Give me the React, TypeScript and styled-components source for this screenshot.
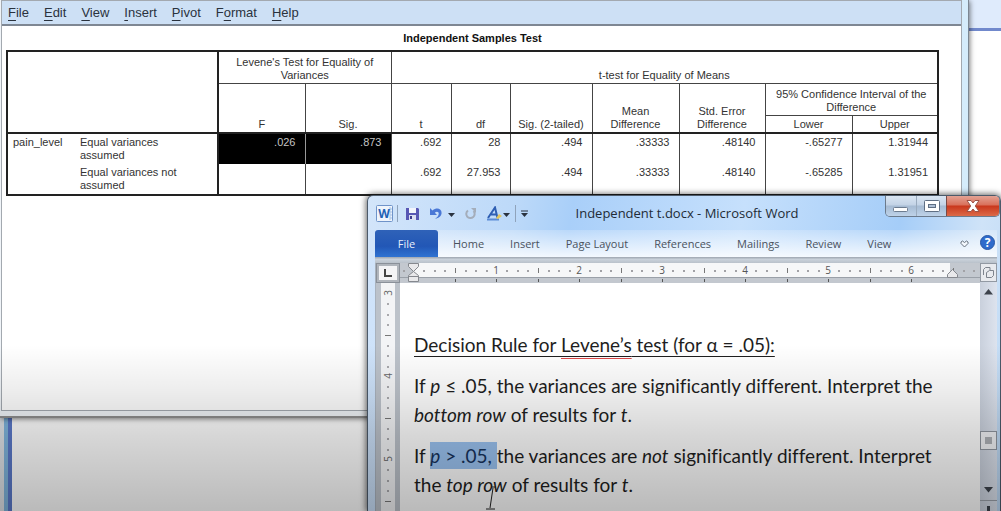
import React from "react";
import styled, { createGlobalStyle } from "styled-components";

const GlobalStyle = createGlobalStyle`
  * { box-sizing: border-box; }
  body { margin: 0; }
  button { margin: 0; padding: 0; border: 0; background: none; font: inherit; color: inherit; }
`;

const Desktop = styled.div`
  position: relative;
  height: 100vh;
  min-height: 480px;
  overflow: hidden;
  background: #fff;
  font-family: "Liberation Sans", Arial, sans-serif;
`;

const BackWindow = styled.div`
  height: 100%;
  border-left: 4px solid #dfe3e8;
  background: #fff;
`;

const BackToolbar = styled.div`
  height: 31px;
  background: #dfebfc;
  border-bottom: 3px solid #7189cc;
`;

const BackEdge = styled.div`
  height: calc(100% - 31px);
  border-left: 4px solid #7fb4dc;
  &::before {
    content: "";
    display: block;
    width: 4px;
    height: 100%;
    background: #5a78c8;
  }
`;

/* ---------- output viewer window ---------- */

const ViewerWindow = styled.section`
  position: absolute;
  top: 0;
  left: 0;
  right: 32px;
  bottom: 93px;
  display: flex;
  flex-direction: column;
  padding: 0 6px 5px 1px;
  background: linear-gradient(90deg, #f0f4f8 0 60%, #d5ecfb);
  border-right: 1px solid #7c8792;
  border-bottom: 2px solid #8d8d8d;
  box-shadow: 1px 1px 5px rgba(0, 0, 0, 0.5);
`;

const ViewerBody = styled.div`
  flex: 1;
  display: flex;
  flex-direction: column;
  border: 1px solid #a3a9b0;
  background: #fff;
`;

const MenuBar = styled.nav`
  display: flex;
  gap: 15px;
  height: 25px;
  padding: 0 6px;
  background: #cde0f5;
  border-bottom: 2px solid #7e8793;
`;

const MenuItem = styled.button`
  font-size: 13px;
  line-height: 23px;
  color: #2a323d;
  u { text-underline-offset: 3px; }
`;

const PivotArea = styled.div`
  padding: 5px 25px 0 4px;
`;

const PivotTable = styled.table`
  width: 100%;
  table-layout: fixed;
  border-collapse: collapse;
  font-size: 11px;
  line-height: 13px;
  color: #333;
  caption {
    padding-bottom: 5px;
    font-weight: bold;
    line-height: 14px;
    color: #111;
  }
  tbody { border: 2px solid #222; }
  thead { border: 2px solid #222; }
`;

const HeadCell = styled.th<{ $heavy?: boolean }>`
  padding: 2px 0 1px;
  font-weight: normal;
  vertical-align: bottom;
  text-align: center;
  border: 1px solid #444;
  border-left: ${(p) => (p.$heavy ? "2px solid #222" : "1px solid #444")};
`;

const HeadRow = styled.tr<{ $h: number }>`
  height: ${(p) => p.$h}px;
`;

const DataRow = styled.tr`
  height: 31px;
`;

const RowLabel = styled.th<{ $sub?: boolean }>`
  padding: ${(p) => (p.$sub ? "2px 30px 2px 0" : "2px 0 2px 5px")};
  font-weight: normal;
  text-align: left;
  vertical-align: top;
`;

const Value = styled.td<{ $selected?: boolean; $heavy?: boolean }>`
  padding: 2px 9px 0 0;
  text-align: right;
  vertical-align: top;
  border-left: ${(p) => (p.$heavy ? "2px solid #222" : p.$selected ? "1px solid #999" : "1px solid #444")};
  background: ${(p) => (p.$selected ? "#000" : "transparent")};
  color: ${(p) => (p.$selected ? "#c4c4c4" : "inherit")};
`;

/* ---------- word processor window ---------- */

const WordWindow = styled.section`
  position: absolute;
  top: 195px;
  left: 367px;
  right: 0;
  bottom: 0;
  display: flex;
  flex-direction: column;
  padding: 0 3px 0 7px;
  border: 1px solid #4c5a6a;
  border-bottom: 0;
  border-radius: 6px 6px 0 0;
  background: linear-gradient(100deg, #d3e5fa 0, #bcd9f9 22%, #a9cff9 30%, #c6e0fc 55%, #a5cdf8 78%, #cfe3f8 90%, #bcd8f4);
  box-shadow: 0 0 6px 1px rgba(0, 0, 0, 0.6);
  font-family: "Open Sans", "Noto Sans", sans-serif;
  overflow: hidden;
`;

const TitleBar = styled.header`
  display: flex;
  align-items: flex-start;
  height: 34px;
`;

const QuickAccess = styled.div`
  display: flex;
  align-items: center;
  padding-top: 8px;
  width: 154px;
`;

const QuickIcon = styled.button<{ $gap: number }>`
  display: flex;
  flex: none;
  margin-right: ${(p) => p.$gap}px;
`;

const Divider = styled.span<{ $gap: number }>`
  flex: none;
  width: 1px;
  height: 17px;
  margin-right: ${(p) => p.$gap}px;
  background: #8fa3bb;
`;

const Title = styled.h1`
  flex: 1;
  margin: 0;
  padding: 7px 40px 0 0;
  font-size: 13px;
  font-weight: normal;
  line-height: 20px;
  text-align: center;
  color: #222b36;
  white-space: nowrap;
`;

const WindowControls = styled.div`
  display: flex;
  height: 21px;
  margin-right: -3px;
  border: 1px solid #6b7a8c;
  border-top: 0;
  border-radius: 0 0 5px 5px;
  overflow: hidden;
`;

const ControlButton = styled.button<{ $close?: boolean }>`
  display: flex;
  align-items: center;
  justify-content: center;
  width: ${(p) => (p.$close ? 53 : 30)}px;
  border-left: ${(p) => (p.$close ? "1px solid #7a4a45" : "1px solid #9aabbe")};
  background: ${(p) =>
    p.$close
      ? "linear-gradient(#e3a294, #d9705a 45%, #c9371c 50%, #dc6a48)"
      : "linear-gradient(#d9e5f2, #c3d3e6 45%, #a6bbd3 50%, #bed2e8)"};
  &:first-child { border-left: 0; }
`;

const TabBar = styled.nav`
  display: flex;
  align-items: stretch;
  gap: 26px;
  height: 27px;
  padding-right: 2px;
  background: linear-gradient(rgba(255, 255, 255, 0.2), rgba(255, 255, 255, 0.85));
  font-size: 11px;
  color: #4a525d;
`;

const Tab = styled.button`
  white-space: nowrap;
`;

const FileTab = styled.button`
  width: 63px;
  margin-right: -11px;
  border-radius: 3px 3px 0 0;
  background: linear-gradient(#2f62b8, #2257b6 60%, #2f73d2);
  color: #e6effb;
`;

const TabTools = styled.div`
  display: flex;
  align-items: center;
  gap: 11px;
  margin-left: auto;
`;

const RibbonEdge = styled.div`
  height: 6px;
  background: linear-gradient(#9da5af, #c9d1da 40%, #b9c1ca);
`;

const Workspace = styled.div`
  flex: 1;
  display: flex;
  min-height: 0;
  border-left: 1px solid #a9b2bd;
  background: #bcc2ca;
`;

const RulerColumn = styled.div`
  display: flex;
  flex-direction: column;
  align-items: center;
  width: 24px;
`;

const TabSelector = styled.button`
  display: flex;
  align-items: center;
  justify-content: center;
  width: 24px;
  height: 20px;
  border: 3px solid #b0b5bc;
  outline: 1px solid #8a9099;
  outline-offset: -1px;
  background: #f4f4f6;
`;

const VerticalRuler = styled.div`
  flex: 1;
  width: 14px;
  overflow: hidden;
  background: #f3f4f6;
`;

const PageColumn = styled.div`
  flex: 1;
  display: flex;
  flex-direction: column;
  min-width: 0;
`;

const HorizontalRuler = styled.div`
  height: 20px;
  overflow: hidden;
`;

const Page = styled.article`
  flex: 1;
  padding: 47px 30px 0 14px;
  overflow: hidden;
  background: #fff;
  color: #1e1e1e;
  font-family: Lato, Carlito, Calibri, sans-serif;
  font-size: 19px;
  font-variant-ligatures: none;
  line-height: 29px;
  p { margin: 0 0 12px; }
`;

const DocHeading = styled.h2`
  margin: 0 0 12px;
  font-size: 19px;
  font-weight: normal;
  text-decoration: underline;
  text-decoration-thickness: 1px;
  text-underline-offset: 4px;
`;

const Misspelled = styled.span`
  text-decoration-line: underline;
  text-decoration-color: #dc4646;
  text-decoration-thickness: 1px;
  text-underline-offset: 6px;
`;

const Selection = styled.span`
  padding: 2px 0;
  background: #9cc4f2;
  color: #16335c;
`;

const ScrollColumn = styled.div`
  display: flex;
  flex-direction: column;
  align-items: center;
  width: 17px;
  background: linear-gradient(90deg, #c9d0dc, #dde3ee);
`;

const RulerToggle = styled.button`
  display: flex;
  align-items: center;
  justify-content: center;
  width: 17px;
  height: 19px;
  border: 1px solid #9299a3;
  background: #e8eaee;
`;

const ScrollArrow = styled.button`
  display: flex;
  align-items: center;
  justify-content: center;
  width: 17px;
  height: 20px;
`;

const Thumb = styled.div`
  display: flex;
  align-items: center;
  justify-content: center;
  width: 17px;
  height: 19px;
  margin: auto 0 30px;
  border: 1px solid #8f959e;
  background: #f2f3f6;
  &::after {
    content: "";
    width: 7px;
    height: 7px;
    background: #aeb1b6;
  }
`;

const PageBrowse = styled.button`
  display: flex;
  justify-content: center;
  width: 17px;
  height: 11px;
  padding-top: 5px;
  border-top: 1px solid #9aa0a9;
`;

const Pointer = styled.svg`
  position: absolute;
  left: 484px;
  top: 484px;
`;

const Vignette = styled.div`
  position: absolute;
  left: 0;
  right: 0;
  bottom: 0;
  height: 166px;
  pointer-events: none;
  background: linear-gradient(rgba(0, 0, 0, 0), rgba(0, 0, 0, 0.07) 27%, rgba(0, 0, 0, 0.16) 55%, rgba(0, 0, 0, 0.27));
`;

const menus: [string, string, string][] = [
  ["", "F", "ile"],
  ["", "E", "dit"],
  ["", "V", "iew"],
  ["", "I", "nsert"],
  ["", "P", "ivot"],
  ["F", "o", "rmat"],
  ["", "H", "elp"],
];

const columnWidths = [73, 138, 87, 86, 60, 59, 82, 87, 86, 87, 86];

const rows = [
  { label: "Equal variances assumed", levene: [".026", ".873"], values: [".692", "28", ".494", ".33333", ".48140", "-.65277", "1.31944"] },
  { label: "Equal variances not assumed", levene: ["", ""], values: [".692", "27.953", ".494", ".33333", ".48140", "-.65285", "1.31951"] },
];

const tabs = ["Home", "Insert", "Page Layout", "References", "Mailings", "Review", "View"];

const INCH = 83;

function RulerScale() {
  const origin = 13;
  const marks = [];
  for (let i = -1; i <= 54; i++) {
    const x = Math.round(origin + (i * INCH) / 8);
    if (i === 0) continue;
    if (i % 8 === 0)
      marks.push(
        <text key={i} x={x} y={11} fontSize={10} textAnchor="middle" fill="#555">{i / 8}</text>
      );
    else if (i % 4 === 0) marks.push(<rect key={i} x={x} y={5} width={1} height={5} fill="#777" />);
    else marks.push(<rect key={i} x={x} y={7} width={2} height={2} fill="#a2a2a6" />);
    if (i > 0 && i % 4 === 0 && i < 51) marks.push(<rect key={`t${i}`} x={x} y={16} width={1} height={3} fill="#555" />);
  }
  return (
    <svg width="1200" height="20" display="block" aria-hidden="true">
      <rect width="1200" height="20" fill="#c3c8cf" />
      <rect x="13" y="0" width="537" height="14" fill="#f6f7f8" />
      <rect y="14" width="1200" height="1" fill="#9aa0a8" />
      {marks}
      <path d="M8.500 .5h10v3l-5 5-5-5z" fill="#e9e9eb" stroke="#85888e" />
      <path d="M13.500 8.500l5 4v6h-10v-6z M8.500 13.500h10" fill="#e9e9eb" stroke="#85888e" />
      <path d="M552.500 6.500l5 5v3h-10v-3z" fill="#e9e9eb" stroke="#85888e" />
    </svg>
  );
}

function VerticalScale() {
  const marks = [];
  for (let i = 0; i <= 22; i++) {
    const y = Math.round(10 + (i * INCH) / 8);
    if (i % 8 === 0)
      marks.push(
        <text key={i} transform={`translate(11 ${y}) rotate(-90)`} fontSize={10} textAnchor="middle" fill="#666">{3 + i / 8}</text>
      );
    else if (i % 4 === 0) marks.push(<rect key={i} x={4} y={y} width={6} height={1} fill="#777" />);
    else marks.push(<rect key={i} x={6} y={y} width={2} height={2} fill="#a9a9ad" />);
  }
  return <svg width="14" height="240" display="block" aria-hidden="true">{marks}</svg>;
}

const Caret = ({ bar }: { bar?: boolean }) => (
  <svg width="7" height="8" viewBox="0 0 7 8">
    {bar && <path d="M0 1h7" stroke="#2a3340" />}
    <path d="M0 3h7L3.500 7z" fill="#2a3340" />
  </svg>
);

function Viewer() {
  return (
    <ViewerWindow aria-label="Output viewer">
      <ViewerBody>
        <MenuBar>
          {menus.map(([pre, key, rest]) => (
            <MenuItem key={pre + key + rest}>{pre}<u>{key}</u>{rest}</MenuItem>
          ))}
        </MenuBar>
        <PivotArea>
          <PivotTable>
            <caption>Independent Samples Test</caption>
            <colgroup>
              {columnWidths.map((w, i) => <col key={i} width={w} />)}
            </colgroup>
            <thead>
              <HeadRow $h={32}>
                <HeadCell as="td" colSpan={2} rowSpan={3} />
                <HeadCell $heavy colSpan={2}>Levene's Test for Equality of Variances</HeadCell>
                <HeadCell colSpan={7}>t-test for Equality of Means</HeadCell>
              </HeadRow>
              <HeadRow $h={32}>
                <HeadCell $heavy rowSpan={2}>F</HeadCell>
                <HeadCell rowSpan={2}>Sig.</HeadCell>
                <HeadCell rowSpan={2}>t</HeadCell>
                <HeadCell rowSpan={2}>df</HeadCell>
                <HeadCell rowSpan={2}>Sig. (2-tailed)</HeadCell>
                <HeadCell rowSpan={2}>Mean<br />Difference</HeadCell>
                <HeadCell rowSpan={2}>Std. Error<br />Difference</HeadCell>
                <HeadCell colSpan={2}>95% Confidence Interval of the Difference</HeadCell>
              </HeadRow>
              <HeadRow $h={16}>
                <HeadCell>Lower</HeadCell>
                <HeadCell>Upper</HeadCell>
              </HeadRow>
            </thead>
            <tbody>
              {rows.map((row, r) => (
                <DataRow key={row.label}>
                  {r === 0 && <RowLabel rowSpan={2}>pain_level</RowLabel>}
                  <RowLabel $sub>{row.label}</RowLabel>
                  {row.levene.map((v, i) => (
                    <Value key={i} $heavy={i === 0} $selected={r === 0}>{v}</Value>
                  ))}
                  {row.values.map((v, i) => <Value key={i}>{v}</Value>)}
                </DataRow>
              ))}
            </tbody>
          </PivotTable>
        </PivotArea>
      </ViewerBody>
    </ViewerWindow>
  );
}

function Word() {
  return (
    <WordWindow aria-label="Microsoft Word">
      <TitleBar>
        <QuickAccess>
          <QuickIcon $gap={3} aria-label="Word menu">
            <svg width="19" height="19" viewBox="0 0 19 19">
              <rect x="1.500" y="1.500" width="16" height="16" rx="1" fill="#eef4fc" stroke="#6f93c9" />
              <path d="M15 3v13M15 5h2M15 8h2M15 11h2M15 14h2" stroke="#a9c3e6" />
              <text x="9" y="14" fontSize="12" fontWeight="bold" textAnchor="middle" fill="#1f62b5">W</text>
            </svg>
          </QuickIcon>
          <Divider $gap={8} />
          <QuickIcon $gap={11} aria-label="Save">
            <svg width="13" height="13" viewBox="0 0 13 13">
              <path d="M0 1h12l1 1v11H0z" fill="#5857b4" />
              <rect x="3" y="1" width="7" height="5" fill="#f3f5fc" />
              <rect x="3" y="8" width="7" height="5" fill="#dcdff2" />
              <rect x="4" y="9" width="2" height="3" fill="#3c3b8c" />
            </svg>
          </QuickIcon>
          <QuickIcon $gap={6} aria-label="Undo">
            <svg width="12" height="14" viewBox="0 0 12 14">
              <path d="M0 1v7h7L4.800 5.800C6.500 3.800 9 4.500 8.700 7c-.2 2-1.700 3.500-3.700 5 4-1 6.500-3 6.600-6C11.700 1.500 6.500 0 2.500 3.600z" fill="#4a78d6" />
            </svg>
          </QuickIcon>
          <QuickIcon $gap={10} aria-label="Undo options"><Caret /></QuickIcon>
          <QuickIcon $gap={11} aria-label="Repeat">
            <svg width="11" height="12" viewBox="0 0 11 12">
              <path d="M3 2.500A4.200 4.200 0 1 0 8.500 3" fill="none" stroke="#a4adba" strokeWidth="2" />
              <path d="M6 0h5v5z" fill="#a4adba" />
            </svg>
          </QuickIcon>
          <QuickIcon $gap={1} aria-label="Text effects">
            <svg width="15" height="15" viewBox="0 0 15 15">
              <path d="M1 12L8 1.500l2.500 10.500M4 8.500h5.500" fill="none" stroke="#2f5fb3" strokeWidth="2" />
              <path d="M0 13.500h12" stroke="#5b8bd6" strokeWidth="2" />
              <path d="M9 12l3-4 3 2-4 3z" fill="#e3c65c" />
            </svg>
          </QuickIcon>
          <QuickIcon $gap={5} aria-label="Text effects options"><Caret /></QuickIcon>
          <Divider $gap={5} />
          <QuickIcon $gap={0} aria-label="Customize toolbar"><Caret bar /></QuickIcon>
        </QuickAccess>
        <Title>Independent t.docx - Microsoft Word</Title>
        <WindowControls>
          <ControlButton aria-label="Minimize">
            <svg width="16" height="16"><rect x=".5" y="9.500" width="14" height="4" rx="1" fill="#fff" stroke="#6c7c90" /></svg>
          </ControlButton>
          <ControlButton aria-label="Maximize">
            <svg width="16" height="14">
              <rect x=".5" y="1.500" width="15" height="11" rx="1" fill="#fff" stroke="#5f6f84" />
              <rect x="4.500" y="5.500" width="7" height="3" fill="#aebfd4" stroke="#5f6f84" />
            </svg>
          </ControlButton>
          <ControlButton $close aria-label="Close">
            <svg width="14" height="12" viewBox="0 0 14 12">
              <path d="M1 .5h4l2 2.500L9 .5h4L9.300 6l3.700 5.500H9L7 9l-2 2.500H1L4.700 6z" fill="#fff" stroke="#9c5246" />
            </svg>
          </ControlButton>
        </WindowControls>
      </TitleBar>
      <TabBar>
        <FileTab>File</FileTab>
        {tabs.map((t) => <Tab key={t}>{t}</Tab>)}
        <TabTools>
          <button aria-label="Minimize the ribbon">
            <svg width="9" height="8" viewBox="0 0 9 8">
              <path d="M4.500 7L1 3.500V2l1.500-1 2 1.500 2-1.500L8 2v1.500z" fill="#f4f8fd" stroke="#66707c" />
            </svg>
          </button>
          <button aria-label="Help">
            <svg width="15" height="15" viewBox="0 0 15 15">
              <circle cx="7.500" cy="7.500" r="7" fill="#2f6bcb" stroke="#2857a4" />
              <text x="7.500" y="12" fontSize="12" fontWeight="bold" textAnchor="middle" fill="#fff">?</text>
            </svg>
          </button>
        </TabTools>
      </TabBar>
      <RibbonEdge />
      <Workspace>
        <RulerColumn>
          <TabSelector aria-label="Tab selector">
            <svg width="8" height="8"><path d="M1 0v7h7" fill="none" stroke="#444" strokeWidth="2" /></svg>
          </TabSelector>
          <VerticalRuler><VerticalScale /></VerticalRuler>
        </RulerColumn>
        <PageColumn>
          <HorizontalRuler><RulerScale /></HorizontalRuler>
          <Page>
            <DocHeading>Decision Rule for <Misspelled>Levene’s</Misspelled> test (for α = .05):</DocHeading>
            <p>If <i>p</i> ≤ .05, the variances are significantly different. Interpret the <i>bottom row</i> of results for <i>t</i>.</p>
            <p>If <Selection><i>p</i> &gt; .05, </Selection>the variances are <i>not</i> significantly different. Interpret the <i>top row</i> of results for <i>t</i>.</p>
          </Page>
        </PageColumn>
        <ScrollColumn>
          <RulerToggle aria-label="View ruler">
            <svg width="12" height="12" viewBox="0 0 12 12" fill="none" stroke="#7d838c">
              <path d="M.5 8V2.500l2-2H7V3M3.500 5.500l3-2h4v5l-2 2h-5z" />
            </svg>
          </RulerToggle>
          <ScrollArrow aria-label="Scroll up">
            <svg width="9" height="6"><path d="M0 5.500L4.500 0 9 5.500z" fill="#3d434c" /></svg>
          </ScrollArrow>
          <Thumb />
          <ScrollArrow aria-label="Scroll down">
            <svg width="9" height="6"><path d="M0 0h9L4.500 5.500z" fill="#3d434c" /></svg>
          </ScrollArrow>
          <PageBrowse aria-label="Previous page">
            <svg width="5" height="6"><rect x="1" width="3" height="6" fill="#3d434c" /></svg>
          </PageBrowse>
        </ScrollColumn>
      </Workspace>
    </WordWindow>
  );
}

export default function App() {
  return (
    <>
      <GlobalStyle />
      <Desktop>
        <BackWindow>
          <BackToolbar />
          <BackEdge />
        </BackWindow>
        <Viewer />
        <Word />
        <Pointer width="14" height="26" viewBox="0 0 14 26" aria-hidden="true">
          <path d="M9 4L6 24M2 25h9M7 3h5" fill="none" stroke="#222" strokeWidth="1" />
        </Pointer>
        <Vignette />
      </Desktop>
    </>
  );
}
